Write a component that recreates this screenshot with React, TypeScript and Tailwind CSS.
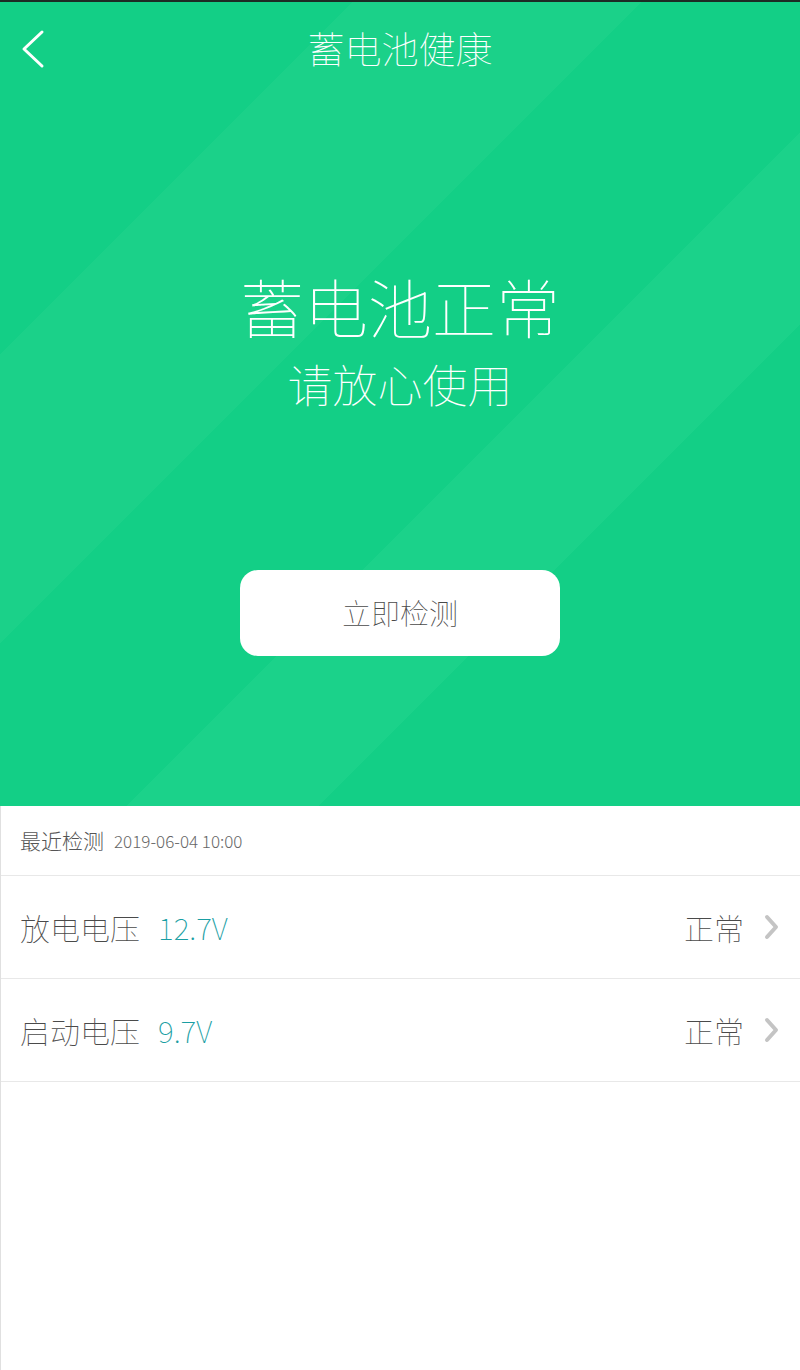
import React from "react";

const font = { fontFamily: '"Noto Sans CJK SC", "Noto Sans", sans-serif' };

function Row({ label, value }: { label: string; value: string }) {
  return (
    <div className="flex h-[103px] items-center border-b border-[#e8e8e8] pl-[19px] pr-[20px]">
      <span className="text-[30px] font-thin text-[#4a4a4a]">{label}</span>
      <span className="ml-[18px] text-[30px] font-thin text-[#1a9ea3]">{value}</span>
      <span className="ml-auto text-[30px] font-thin text-[#4a4a4a]">正常</span>
      <svg width="16" height="26" viewBox="0 0 16 26" className="ml-[20px]">
        <polyline points="3,3 12,13 3,23" fill="none" stroke="#c4c4c4" strokeWidth="4" strokeLinecap="round" strokeLinejoin="round" />
      </svg>
    </div>
  );
}

export default function App() {
  return (
    <div className="flex h-[1370px] w-[800px] flex-col bg-white" style={font}>
      <div className="h-[2px] bg-[#1d2b25]" />
      <div className="relative flex h-[804px] flex-col items-center overflow-hidden bg-[#13cf86] bg-[linear-gradient(135deg,#13cf86_0%,#13cf86_22%,#1bd189_22%,#1bd189_40%,#13cf86_40%,#13cf86_58%,#1bd28a_58%,#1bd28a_70%,#13cf86_70%,#13cf86_100%)]">
        <div className="relative flex h-[96px] w-full items-center justify-center">
          <svg width="30" height="40" viewBox="0 0 30 40" className="absolute left-[18px] top-[27px]">
            <polyline points="24,3 6,20 24,37" fill="none" stroke="white" strokeWidth="3" strokeLinecap="round" strokeLinejoin="round" />
          </svg>
          <span className="-mt-[4px] text-[37px] font-thin leading-none text-white">蓄电池健康</span>
        </div>
        <div className="mt-[175px] text-[64px] font-thin leading-none text-white">蓄电池正常</div>
        <div className="mt-[24px] text-[45px] font-thin leading-none text-white">请放心使用</div>
        <button className="mt-[164px] flex h-[86px] w-[320px] items-center justify-center rounded-[18px] bg-white text-[29px] font-thin text-[#4a4a4a]">
          立即检测
        </button>
      </div>
      <div className="flex flex-1 flex-col border-l border-[#e0e0e0]">
        <div className="flex h-[70px] items-center border-b border-[#e8e8e8] pl-[19px]">
          <span className="text-[21px] font-light text-[#555]">最近检测</span>
          <span className="ml-[10px] text-[17px] font-light text-[#666]">2019-06-04 10:00</span>
        </div>
        <Row label="放电电压" value="12.7V" />
        <Row label="启动电压" value="9.7V" />
      </div>
    </div>
  );
}
